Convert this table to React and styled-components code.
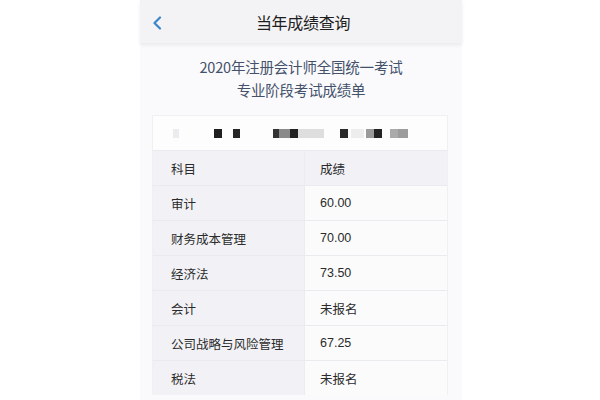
import React from "react";
import styled, { createGlobalStyle } from "styled-components";

const GlobalStyle = createGlobalStyle`
  html, body {
    margin: 0;
    padding: 0;
    background: #ffffff;
  }
  body {
    font-family: "Noto Sans CJK SC", "Noto Sans", sans-serif;
  }
`;

const scores = [
  { subject: "审计", score: "60.00" },
  { subject: "财务成本管理", score: "70.00" },
  { subject: "经济法", score: "73.50" },
  { subject: "会计", score: "未报名" },
  { subject: "公司战略与风险管理", score: "67.25" },
  { subject: "税法", score: "未报名" },
];

// mosaic blocks covering the candidate's name: [gap before, width, colour]
const mosaic = [
  [20, 6, "#ececee"],
  [35, 8, "#1f1f1f"],
  [11, 7, "#262626"],
  [33, 6, "#333333"],
  [0, 11, "#8a8a8a"],
  [0, 8, "#222222"],
  [0, 26, "#dedede"],
  [16, 8, "#2a2a2a"],
  [3, 13, "#ededed"],
  [2, 8, "#9a9a9a"],
  [0, 8, "#232323"],
  [8, 8, "#aaaaaa"],
  [0, 10, "#9c9c9c"],
];

export default function App() {
  return (
    <>
      <GlobalStyle />
      <Page>
        <Screen>
          <Header>
            <BackButton>
              <svg width="10" height="14" viewBox="0 0 10 14">
                <path
                  d="M8 1.5 L2.5 7 L8 12.5"
                  fill="none"
                  stroke="#3a86c6"
                  strokeWidth="2.2"
                  strokeLinecap="round"
                  strokeLinejoin="round"
                />
              </svg>
            </BackButton>
            <HeaderTitle>当年成绩查询</HeaderTitle>
          </Header>

          <Titles>
            <div>2020年注册会计师全国统一考试</div>
            <div>专业阶段考试成绩单</div>
          </Titles>

          <Card>
            <NameRow>
              {mosaic.map(([gap, w, c], i) => (
                <Pixel key={i} $gap={gap} $w={w} $c={c} />
              ))}
            </NameRow>
            <Table>
              <Cell $side>科目</Cell>
              <Cell $head>成绩</Cell>
              {scores.map((row) => (
                <React.Fragment key={row.subject}>
                  <Cell $side>{row.subject}</Cell>
                  <Cell>{row.score}</Cell>
                </React.Fragment>
              ))}
            </Table>
          </Card>
        </Screen>
      </Page>
    </>
  );
}

const Page = styled.div`
  width: 600px;
  height: 400px;
  display: flex;
  padding-left: 140px;
  box-sizing: border-box;
  overflow: hidden;
`;

const Screen = styled.div`
  width: 322px;
  height: 400px;
  background: #fafafc;
  display: flex;
  flex-direction: column;
`;

const Header = styled.div`
  position: relative;
  height: 43px;
  flex-shrink: 0;
  background: #f3f3f5;
  box-shadow: 0 2px 4px rgba(0, 0, 0, 0.07);
  display: flex;
  align-items: center;
  justify-content: center;
  z-index: 1;
`;

const BackButton = styled.div`
  position: absolute;
  left: 12px;
  top: 16px;
  width: 10px;
  height: 14px;
  display: flex;
`;

const HeaderTitle = styled.div`
  font-size: 16px;
  color: #1e1e1e;
  letter-spacing: -0.3px;
  margin-left: 4px;
`;

const Titles = styled.div`
  padding-top: 12px;
  text-align: center;
  font-size: 14.5px;
  line-height: 23px;
  color: #44516b;
  letter-spacing: -0.2px;
`;

const Card = styled.div`
  margin: 14px 14px 0 12px;
  background: #fdfdfe;
  border: 1px solid #f0f0f3;
  border-bottom: none;
`;

const NameRow = styled.div`
  height: 34px;
  display: flex;
  align-items: center;
  box-sizing: border-box;
  padding-left: 0;
`;

const Pixel = styled.span`
  display: block;
  margin-left: ${(p) => p.$gap}px;
  width: ${(p) => p.$w}px;
  height: 9px;
  background: ${(p) => p.$c};
`;

const Table = styled.div`
  display: grid;
  grid-template-columns: 151px 1fr;
`;

const Cell = styled.div`
  height: 35px;
  box-sizing: border-box;
  display: flex;
  align-items: center;
  padding-left: ${(p) => (p.$side ? "18px" : "15px")};
  border-top: 1px solid #ebebef;
  background: ${(p) => (p.$side || p.$head ? "#f2f2f6" : "#fbfbfc")};
  border-left: ${(p) => (p.$side ? "none" : "1px solid #ececf0")};
  font-size: 12.5px;
  color: #2b2b2b;
  font-family: ${(p) =>
    p.$side ? '"Noto Sans CJK SC", sans-serif' : '"Liberation Sans", "Noto Sans CJK SC", sans-serif'};
`;
